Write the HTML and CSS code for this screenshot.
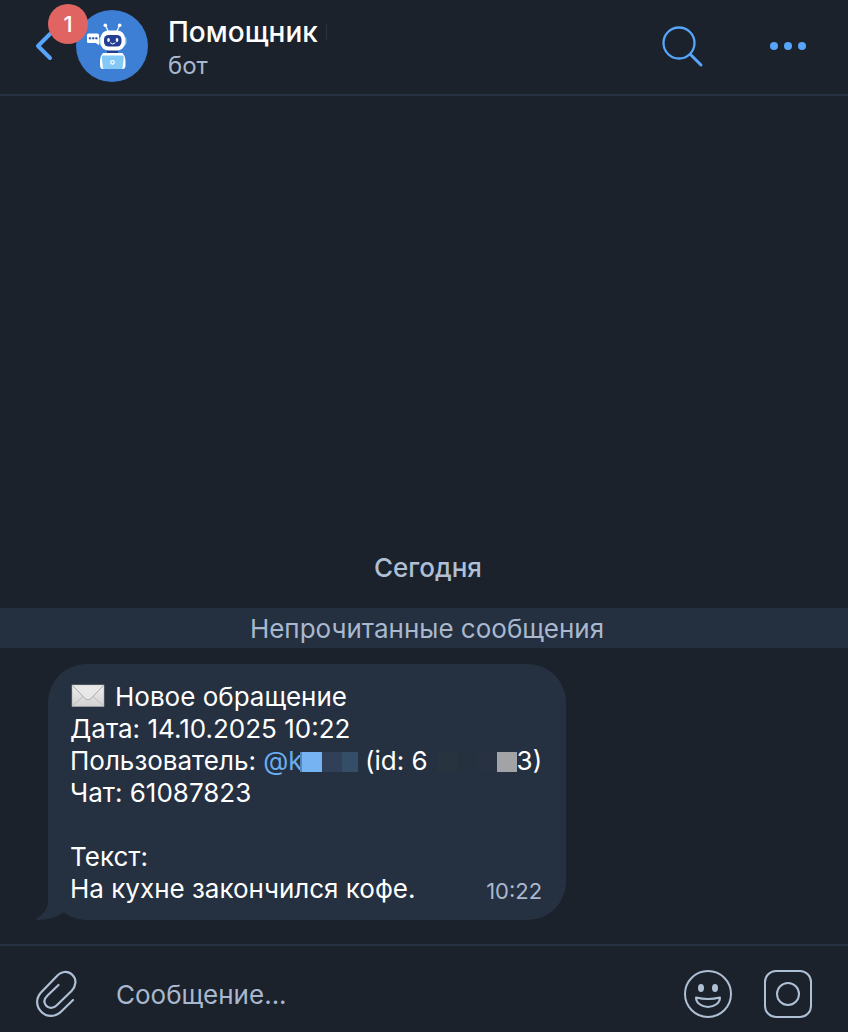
FILE: index.html
```html
<!DOCTYPE html>
<html lang="ru">
<head>
<meta charset="utf-8">
<meta name="viewport" content="width=device-width, initial-scale=1">
<title>Помощник</title>
<link rel="stylesheet" href="styles.css">
</head>
<body>
<div class="chat">
  <header class="header">
    <button class="back" aria-label="Назад">
      <svg width="18" height="30" viewBox="0 0 18 30" fill="none" stroke="currentColor" stroke-width="4" stroke-linecap="round" stroke-linejoin="round"><path d="M15 3 3 15 15 27"/></svg>
      <span class="badge">1</span>
    </button>
    <svg class="avatar" width="72" height="72" viewBox="0 0 72 72" aria-hidden="true">
      <circle cx="36" cy="36" r="36" fill="#3c7fd5"/>
      <path d="M32.5 22 29.5 15.500M40.500 22 43.500 15.500" stroke="#e8f5ff" stroke-width="1.400" fill="none"/>
      <circle cx="29.300" cy="15.300" r="1.800" fill="#fff"/><circle cx="43.700" cy="15.300" r="1.800" fill="#fff"/>
      <rect x="11" y="23.500" width="12" height="9.500" rx="1.500" fill="#fff"/>
      <path d="M18 32h5v3z" fill="#fff"/>
      <circle cx="14" cy="28.300" r="1.200" fill="#3c66b5"/><circle cx="17.200" cy="28.300" r="1.200" fill="#3c66b5"/><circle cx="20.400" cy="28.300" r="1.200" fill="#3c66b5"/>
      <rect x="23" y="26" width="27.500" height="10" rx="4" fill="#8fd0f5"/>
      <rect x="31" y="39" width="11" height="5" fill="#233d88"/>
      <rect x="24.500" y="20.500" width="24.500" height="20" rx="8" fill="#fff"/>
      <rect x="28" y="25" width="17.500" height="11.500" rx="4.500" fill="#243f91"/>
      <ellipse cx="32.500" cy="30" rx="1.300" ry="2" fill="#fff"/><ellipse cx="41" cy="30" rx="1.300" ry="2" fill="#fff"/>
      <path d="M34.500 33q2.200 2.200 4.500 0" stroke="#fff" stroke-width="1" fill="none" stroke-linecap="round"/>
      <path d="M27 43h19.500q3 3 3 7v5q0 4-3 4H27q-3 0-3-4v-5q0-4 3-7z" fill="#fff"/>
      <path d="M27 45.500h19.500q1.300 0 1.200 1.500l-1 10.500q-.2 1.500-1.700 1.500H28.500q-1.500 0-1.700-1.500l-1-10.500q-.1-1.500 1.200-1.500z" fill="#84c9f5"/>
      <circle cx="36.500" cy="52.300" r="1.800" fill="none" stroke="#fff" stroke-width="1.200"/>
    </svg>
    <div class="peer">
      <div class="peer-title"><h1 class="peer-name">Помощник</h1></div>
      <p class="peer-status">бот</p>
    </div>
    <button class="icon-button accent" aria-label="Поиск">
      <svg width="44" height="44" viewBox="0 0 44 44" fill="none" stroke="currentColor" stroke-linecap="round"><circle cx="19" cy="19" r="15.500" stroke-width="2.300"/><path d="M30.500 30.500 41 41" stroke-width="3"/></svg>
    </button>
    <button class="icon-button accent more" aria-label="Меню">
      <svg width="36" height="8" viewBox="0 0 36 8" fill="currentColor"><circle cx="4" cy="4" r="4"/><circle cx="18" cy="4" r="4"/><circle cx="32" cy="4" r="4"/></svg>
    </button>
  </header>

  <main class="history">
    <p class="day">Сегодня</p>
    <p class="unread">Непрочитанные сообщения</p>
    <article class="message">
      <svg class="tail" width="28" height="36" viewBox="0 0 28 36" aria-hidden="true"><path d="M12 0V16C12 25 8 30 0 34.500Q0 36 2 36Q16 36 28 28V0Z" fill="currentColor"/></svg>
      <div class="bubble">
        <p><svg class="envelope" width="34" height="24" viewBox="0 0 34 24" aria-hidden="true">
          <defs><linearGradient id="paper" x1="0" y1="0" x2="0" y2="1"><stop offset="0" stop-color="#eeeeee"/><stop offset="1" stop-color="#d2d2d2"/></linearGradient></defs>
          <rect x="1" y="1" width="32" height="21.500" fill="url(#paper)" stroke="#aaa" stroke-width=".6"/>
          <path d="M1.500 22 12.500 12M32.500 22 21.500 12" stroke="#bdbdbd" stroke-width="1" fill="none"/>
          <path d="M1.500 1.500 14 14.500q3 3 6 0L32.500 1.500" stroke="#a9a9a9" stroke-width="1" fill="#e8e8e8"/>
        </svg>Новое обращение</p>
        <p>Дата: 14.10.2025 10:22</p>
        <p>Пользователь: <a class="mention" href="#">@k<span class="mask mask-name"></span></a> (id: 6<span class="mask mask-id"></span>3)</p>
        <p>Чат: 61087823</p>
        <p class="blank"></p>
        <p>Текст:</p>
        <div class="last-line"><p>На кухне закончился кофе.</p><time class="time">10:22</time></div>
      </div>
    </article>
  </main>

  <footer class="composer">
    <button class="icon-button" aria-label="Прикрепить файл">
      <svg width="42" height="48" viewBox="0 0 42 48" fill="none" stroke="currentColor" stroke-width="2.200" stroke-linecap="round" stroke-linejoin="round"><path d="M37 30 25.500 41.200C20 47 11 47.500 5.500 42C-.5 36 0 28 5 22.500L20.500 6.500C25 1 32 .5 36.500 5C41 9.500 40 16 35.500 21L20.500 35.500C17 39 12.500 38.500 10 35.500C7.500 32.500 8 29 11.500 25.500L22.500 15"/></svg>
    </button>
    <input class="field" type="text" placeholder="Сообщение..." aria-label="Сообщение">
    <button class="icon-button" aria-label="Эмодзи">
      <svg width="48" height="48" viewBox="0 0 48 48" fill="none" stroke="currentColor" stroke-width="2" stroke-linejoin="round"><circle cx="24" cy="24" r="23"/><ellipse cx="17" cy="18" rx="3" ry="4" fill="currentColor" stroke="none"/><ellipse cx="31" cy="18" rx="3" ry="4" fill="currentColor" stroke="none"/><path d="M12 27.500Q24 30.500 36 27.500C36 33 30.500 37 24 37S12 33 12 27.500Z"/></svg>
    </button>
    <button class="icon-button" aria-label="Видеосообщение">
      <svg width="48" height="48" viewBox="0 0 48 48" fill="none" stroke="currentColor" stroke-width="2"><rect x="1" y="1" width="46" height="46" rx="11"/><circle cx="24" cy="24" r="11"/></svg>
    </button>
  </footer>
</div>
</body>
</html>
```
FILE: styles.css
```css
* { box-sizing: border-box; }

body {
  margin: 0;
  background: #1b222b;
  color: #fff;
  font: 400 26px/32px Inter, "Noto Sans", sans-serif;
}

h1, p { margin: 0; }

svg { display: block; flex: none; }

button {
  padding: 0;
  border: 0;
  background: none;
  color: inherit;
  font: inherit;
  cursor: pointer;
}

.chat {
  display: flex;
  flex-direction: column;
  min-height: 100vh;
}

.header {
  display: flex;
  align-items: center;
  height: 96px;
  padding: 0 42px 2px 35px;
  border-bottom: 2px solid #263242;
}

.back {
  position: relative;
  width: 41px;
  color: #57a5fb;
}

.badge {
  position: absolute;
  z-index: 1;
  left: 13px;
  top: -27px;
  width: 40px;
  height: 40px;
  border-radius: 50%;
  background: #e06562;
  color: #fff;
  font-size: 22px;
  font-weight: 500;
  line-height: 40px;
  text-align: center;
}

.peer {
  flex: 1;
  min-width: 0;
  padding-top: 4px;
  margin-left: 20px;
}

.peer-title {
  display: flex;
  align-items: center;
  gap: 8px;
}

.peer-title::after {
  width: 1px;
  height: 16px;
  background: #2a323b;
  content: "";
}

.peer-name {
  font-size: 28px;
  font-weight: 500;
  line-height: 36px;
}

.peer-status {
  color: #a9b8ce;
  font-size: 24px;
  line-height: 32px;
}

.icon-button {
  flex: none;
  color: #afbfd5;
}

.accent { color: #57a5fb; }

.more { margin-left: 66px; }

.history {
  display: flex;
  flex: 1;
  flex-direction: column;
  justify-content: flex-end;
  padding-bottom: 24px;
}

.day {
  padding-left: 8px;
  margin-bottom: 24px;
  color: #afbfd5;
  font-weight: 500;
  text-align: center;
}

.unread {
  padding: 5px 0 3px 6px;
  background: #242f3f;
  color: #a9b8ce;
  text-align: center;
}

.message {
  position: relative;
  align-self: flex-start;
  margin: 16px 48px 0;
  color: #253040;
}

.tail {
  position: absolute;
  left: -12px;
  bottom: 0;
}

.bubble {
  padding: 17px 24px 15px 22px;
  border-radius: 38px;
  background: #253040;
  color: #fff;
}

.envelope {
  display: inline-block;
  margin: 0 10px 0 1px;
  vertical-align: -2px;
}

.blank { height: 32px; }

.mention {
  color: #69aeee;
  text-decoration: none;
}

.mask {
  display: inline-block;
  height: 20px;
  vertical-align: -2px;
}

.mask-name {
  width: 58px;
  margin-left: -3px;
  background: linear-gradient(90deg, #5685b5 0 2px, #76b3f2 2px 22px, #2f4058 22px 42px, #344e67 42px);
}

.mask-id {
  width: 80px;
  margin-left: 9px;
  background: linear-gradient(90deg, #283340 0 20px, #263140 20px 40px, #273141 40px 60px, #a2a3a6 60px);
}

.last-line {
  display: flex;
  justify-content: space-between;
}

.time {
  padding-top: 5px;
  color: #a9b8ce;
  font-size: 22px;
  line-height: 27px;
}

.composer {
  display: flex;
  align-items: center;
  gap: 32px;
  height: 88px;
  padding: 10px 36px 0;
  border-top: 2px solid #263242;
}

.field {
  flex: 1;
  min-width: 0;
  padding: 2px 0 0;
  margin-left: 6px;
  border: 0;
  outline: 0;
  background: none;
  color: #fff;
  font: inherit;
}

.field::placeholder {
  color: #a9b8ce;
  opacity: 1;
}
```
